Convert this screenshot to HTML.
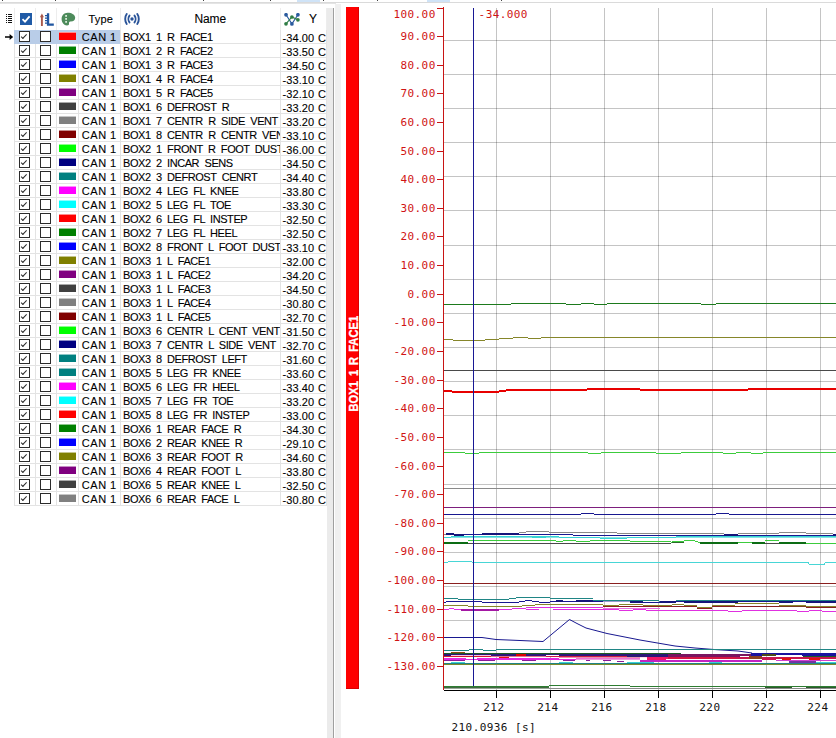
<!DOCTYPE html>
<html lang="en"><head><meta charset="utf-8"><title>Signal list and chart</title>
<style>
html,body{margin:0;padding:0;}
body{width:836px;height:738px;background:#fff;overflow:hidden;position:relative;font-family:"Liberation Sans",sans-serif;font-size:12px;color:#1a1a1a;}
#top{position:absolute;left:0;top:2px;width:836px;height:2px;background:linear-gradient(90deg,transparent 336px,#fff 336px) 0 1px/100% 1px no-repeat,linear-gradient(#dadada,#dadada 1px,#e4e4e4 1px);}
#top:before{content:"";position:absolute;left:297px;top:-2px;width:23px;height:2px;background:#cfe3f7;box-shadow:130px 0 0 #cfe3f7;}
#top i{position:absolute;top:-2px;width:1px;height:1px;background:#444;}
#left{position:absolute;left:0;top:0;width:327px;height:738px;}
#hdr{position:absolute;left:0;top:8px;width:327px;height:22px;}
#hdr .sep{position:absolute;top:0px;width:1px;height:22px;background:#ededed;}
#hdr .t{position:absolute;top:4px;height:14px;line-height:14px;font-size:12px;color:#000;-webkit-text-stroke:0.1px #000;}
#hdr svg{position:absolute;}
#rows{position:absolute;left:0;top:30px;width:327px;}
.r{position:relative;height:14px;width:327px;line-height:15px;white-space:nowrap;font-size:11px;color:#000;-webkit-text-stroke:0.1px #000;}
.r span{position:absolute;top:0;height:13px;border-bottom:1px solid #e3e3e3;border-left:1px solid #e3e3e3;box-sizing:content-box;overflow:hidden;}
.c1{left:14px;width:20px;}
.c2{left:35px;width:20px;}
.c3{left:56px;width:21px;}
.c4{left:78px;width:41px;text-indent:2.8px;letter-spacing:0.6px;word-spacing:-0.4px;}
.c5{left:120px;width:159px;text-indent:2.1px;letter-spacing:-0.45px;word-spacing:2.8px;}
.c6{left:280px;width:45px;line-height:17px;text-indent:1.5px;border-right:1px solid #e3e3e3;word-spacing:0.5px;letter-spacing:0.1px;}
.r.sel .c1,.r.sel .c2,.r.sel .c3,.r.sel .c4{background:#b9cde8;border-bottom-color:#b9cde8;border-left-color:#b9cde8;}
.cb{position:absolute;left:4px;top:1px;width:9px;height:9px;border:1px solid #2b2b2b;background:#fff;}
.c2 .cb{left:4px;}
.ck:after{content:"";position:absolute;box-sizing:border-box;left:3.1px;top:4.4px;width:6.3px;height:3.1px;border-left:1.15px solid #2b2b2b;border-bottom:1.15px solid #2b2b2b;transform:rotate(-47deg);transform-origin:0% 100%;}
.sw{position:absolute;left:2px;top:3px;width:17px;height:7px;}
#arrow{position:absolute;left:4px;top:32px;width:10px;height:10px;}
#sb{position:absolute;left:327px;top:8px;width:6px;height:730px;background:#ebebeb;}
#sbline{position:absolute;left:333px;top:8px;width:1px;height:730px;background:#a0a0a0;}
#split{position:absolute;left:335px;top:4px;width:6px;height:734px;background:#f0f0f0;}
#chart{position:absolute;left:0;top:0;}
.mono{font-family:"DejaVu Sans Mono","Liberation Mono",monospace;font-size:11px;letter-spacing:0.42px;}

</style></head>
<body>
<div id="top"><i style="left:2px"></i><i style="left:55px"></i><i style="left:203px"></i><i style="left:270px"></i><i style="left:323px"></i><i style="left:377px"></i><i style="left:501px"></i></div>
<div id="left">
<div id="hdr">
<i class="sep" style="left:14px"></i><i class="sep" style="left:35px"></i><i class="sep" style="left:56px"></i><i class="sep" style="left:78px"></i><i class="sep" style="left:120px"></i><i class="sep" style="left:280px"></i><i class="sep" style="left:326px"></i>
<svg style="left:5px;top:5px" width="8" height="11" viewBox="0 0 8 11"><g fill="#111"><rect x="1" y="1" width="1" height="1"/><rect x="3" y="1" width="4" height="1"/><rect x="1" y="3" width="1" height="1"/><rect x="3" y="3" width="4" height="1"/><rect x="1" y="5" width="1" height="1"/><rect x="3" y="5" width="4" height="1"/><rect x="1" y="7" width="1" height="1"/><rect x="3" y="7" width="4" height="1"/><rect x="1" y="9" width="1" height="1"/><rect x="3" y="9" width="4" height="1"/></g></svg>
<svg style="left:20px;top:5px" width="12" height="12" viewBox="0 0 12 12"><rect width="12" height="12" fill="#1f5aa6"/><path d="M2.5 6.2 L5 8.6 L9.6 3.4" fill="none" stroke="#fff" stroke-width="1.8"/></svg>
<svg style="left:39px;top:5px" width="16" height="14" viewBox="0 0 16 14"><path d="M2.9 13V2.2" fill="none" stroke="#a9584a" stroke-width="1.9"/><path d="M0.9 4.3L2.9 0.6L4.9 4.3Z" fill="#a9584a"/><path d="M9.05 0.2V11.7H14.8" fill="none" stroke="#1f55a0" stroke-width="2.3"/><path d="M6 2.6H8M6 5.1H8M6 7.6H8M6 10.1H8" stroke="#1f55a0" stroke-width="1.1"/></svg>
<svg style="left:61px;top:4px" width="15" height="14" viewBox="0 0 15 14"><path d="M6.6 0.8C3 0.8 0.6 3.6 0.6 7C0.6 10.4 3 13.4 6 13.4C7.6 13.4 8.2 12.4 8 11.4C7.8 10.2 8.6 9.6 9.8 9.6C12.6 9.6 14.2 8 14.2 5.8C14.2 2.8 10.8 0.8 6.6 0.8Z" fill="#4d8b5b"/><rect x="4.2" y="3" width="1.8" height="1.8" fill="#d9ecd9"/><rect x="4.2" y="6" width="1.8" height="1.8" fill="#d9ecd9"/><rect x="4.2" y="9" width="1.8" height="1.8" fill="#d9ecd9"/></svg>
<span class="t" style="left:88.4px;top:3.5px;font-size:11px;letter-spacing:0.25px">Type</span>
<svg style="left:124px;top:5px" width="16" height="12" viewBox="0 0 16 12"><g fill="none" stroke="#2a5499" stroke-width="1.9" stroke-linecap="round"><path d="M2.7 1C0.7 3.6 0.7 8.4 2.7 11"/><path d="M5.5 2.6C4.1 4.4 4.1 7.6 5.5 9.4"/><path d="M13.3 1C15.3 3.6 15.3 8.4 13.3 11"/><path d="M10.5 2.6C11.9 4.4 11.9 7.6 10.5 9.4"/></g><circle cx="8" cy="6" r="1.7" fill="#2a5499"/></svg>
<span class="t" style="left:194.5px;letter-spacing:-0.15px">Name</span>
<svg style="left:284px;top:5px" width="16" height="13" viewBox="0 0 16 13"><g stroke-width="1.1" fill="none"><path d="M2.05 1.8L7.9 10.9L13.9 1.8" stroke="#2a5a9e"/><path d="M2 10.8L7.9 4L13.9 6.8" stroke="#2f7d45"/></g><circle cx="2.05" cy="1.8" r="1.85" fill="#2a5a9e"/><circle cx="13.9" cy="1.8" r="1.85" fill="#2a5a9e"/><circle cx="7.9" cy="10.9" r="1.85" fill="#2a5a9e"/><circle cx="2" cy="10.8" r="1.85" fill="#2f7d45"/><circle cx="7.9" cy="4" r="1.85" fill="#2f7d45"/><circle cx="13.9" cy="6.8" r="1.85" fill="#2f7d45"/></svg>
<span class="t" style="left:309px">Y</span>
</div>

<div id="rows">
<div class="r sel"><span class="c1"><i class="cb ck"></i></span><span class="c2"><i class="cb"></i></span><span class="c3"><i class="sw" style="background:#ff0000;box-shadow:0 -1px 0 #ff8c8c"></i></span><span class="c4">CAN 1</span><span class="c5">BOX1 1 R FACE1</span><span class="c6">-34.00 C</span></div>
<div class="r"><span class="c1"><i class="cb ck"></i></span><span class="c2"><i class="cb"></i></span><span class="c3"><i class="sw" style="background:#008000;box-shadow:0 -1px 0 #8cc68c"></i></span><span class="c4">CAN 1</span><span class="c5">BOX1 2 R FACE2</span><span class="c6">-33.50 C</span></div>
<div class="r"><span class="c1"><i class="cb ck"></i></span><span class="c2"><i class="cb"></i></span><span class="c3"><i class="sw" style="background:#0000ff;box-shadow:0 -1px 0 #8c8cff"></i></span><span class="c4">CAN 1</span><span class="c5">BOX1 3 R FACE3</span><span class="c6">-34.50 C</span></div>
<div class="r"><span class="c1"><i class="cb ck"></i></span><span class="c2"><i class="cb"></i></span><span class="c3"><i class="sw" style="background:#808000;box-shadow:0 -1px 0 #c6c68c"></i></span><span class="c4">CAN 1</span><span class="c5">BOX1 4 R FACE4</span><span class="c6">-33.10 C</span></div>
<div class="r"><span class="c1"><i class="cb ck"></i></span><span class="c2"><i class="cb"></i></span><span class="c3"><i class="sw" style="background:#800080;box-shadow:0 -1px 0 #c68cc6"></i></span><span class="c4">CAN 1</span><span class="c5">BOX1 5 R FACE5</span><span class="c6">-32.10 C</span></div>
<div class="r"><span class="c1"><i class="cb ck"></i></span><span class="c2"><i class="cb"></i></span><span class="c3"><i class="sw" style="background:#404040;box-shadow:0 -1px 0 #a9a9a9"></i></span><span class="c4">CAN 1</span><span class="c5">BOX1 6 DEFROST R</span><span class="c6">-33.20 C</span></div>
<div class="r"><span class="c1"><i class="cb ck"></i></span><span class="c2"><i class="cb"></i></span><span class="c3"><i class="sw" style="background:#808080;box-shadow:0 -1px 0 #c6c6c6"></i></span><span class="c4">CAN 1</span><span class="c5">BOX1 7 CENTR R SIDE VENT</span><span class="c6">-33.20 C</span></div>
<div class="r"><span class="c1"><i class="cb ck"></i></span><span class="c2"><i class="cb"></i></span><span class="c3"><i class="sw" style="background:#800000;box-shadow:0 -1px 0 #c68c8c"></i></span><span class="c4">CAN 1</span><span class="c5">BOX1 8 CENTR R CENTR VENT</span><span class="c6">-33.10 C</span></div>
<div class="r"><span class="c1"><i class="cb ck"></i></span><span class="c2"><i class="cb"></i></span><span class="c3"><i class="sw" style="background:#00ff00;box-shadow:0 -1px 0 #8cff8c"></i></span><span class="c4">CAN 1</span><span class="c5">BOX2 1 FRONT R FOOT DUST</span><span class="c6">-36.00 C</span></div>
<div class="r"><span class="c1"><i class="cb ck"></i></span><span class="c2"><i class="cb"></i></span><span class="c3"><i class="sw" style="background:#000080;box-shadow:0 -1px 0 #8c8cc6"></i></span><span class="c4">CAN 1</span><span class="c5">BOX2 2 INCAR SENS</span><span class="c6">-34.50 C</span></div>
<div class="r"><span class="c1"><i class="cb ck"></i></span><span class="c2"><i class="cb"></i></span><span class="c3"><i class="sw" style="background:#008080;box-shadow:0 -1px 0 #8cc6c6"></i></span><span class="c4">CAN 1</span><span class="c5">BOX2 3 DEFROST CENRT</span><span class="c6">-34.40 C</span></div>
<div class="r"><span class="c1"><i class="cb ck"></i></span><span class="c2"><i class="cb"></i></span><span class="c3"><i class="sw" style="background:#ff00ff;box-shadow:0 -1px 0 #ff8cff"></i></span><span class="c4">CAN 1</span><span class="c5">BOX2 4 LEG FL KNEE</span><span class="c6">-33.80 C</span></div>
<div class="r"><span class="c1"><i class="cb ck"></i></span><span class="c2"><i class="cb"></i></span><span class="c3"><i class="sw" style="background:#00ffff;box-shadow:0 -1px 0 #8cffff"></i></span><span class="c4">CAN 1</span><span class="c5">BOX2 5 LEG FL TOE</span><span class="c6">-33.30 C</span></div>
<div class="r"><span class="c1"><i class="cb ck"></i></span><span class="c2"><i class="cb"></i></span><span class="c3"><i class="sw" style="background:#ff0000;box-shadow:0 -1px 0 #ff8c8c"></i></span><span class="c4">CAN 1</span><span class="c5">BOX2 6 LEG FL INSTEP</span><span class="c6">-32.50 C</span></div>
<div class="r"><span class="c1"><i class="cb ck"></i></span><span class="c2"><i class="cb"></i></span><span class="c3"><i class="sw" style="background:#008000;box-shadow:0 -1px 0 #8cc68c"></i></span><span class="c4">CAN 1</span><span class="c5">BOX2 7 LEG FL HEEL</span><span class="c6">-32.50 C</span></div>
<div class="r"><span class="c1"><i class="cb ck"></i></span><span class="c2"><i class="cb"></i></span><span class="c3"><i class="sw" style="background:#0000ff;box-shadow:0 -1px 0 #8c8cff"></i></span><span class="c4">CAN 1</span><span class="c5">BOX2 8 FRONT L FOOT DUST</span><span class="c6">-33.10 C</span></div>
<div class="r"><span class="c1"><i class="cb ck"></i></span><span class="c2"><i class="cb"></i></span><span class="c3"><i class="sw" style="background:#808000;box-shadow:0 -1px 0 #c6c68c"></i></span><span class="c4">CAN 1</span><span class="c5">BOX3 1 L FACE1</span><span class="c6">-32.00 C</span></div>
<div class="r"><span class="c1"><i class="cb ck"></i></span><span class="c2"><i class="cb"></i></span><span class="c3"><i class="sw" style="background:#800080;box-shadow:0 -1px 0 #c68cc6"></i></span><span class="c4">CAN 1</span><span class="c5">BOX3 1 L FACE2</span><span class="c6">-34.20 C</span></div>
<div class="r"><span class="c1"><i class="cb ck"></i></span><span class="c2"><i class="cb"></i></span><span class="c3"><i class="sw" style="background:#404040;box-shadow:0 -1px 0 #a9a9a9"></i></span><span class="c4">CAN 1</span><span class="c5">BOX3 1 L FACE3</span><span class="c6">-34.50 C</span></div>
<div class="r"><span class="c1"><i class="cb ck"></i></span><span class="c2"><i class="cb"></i></span><span class="c3"><i class="sw" style="background:#808080;box-shadow:0 -1px 0 #c6c6c6"></i></span><span class="c4">CAN 1</span><span class="c5">BOX3 1 L FACE4</span><span class="c6">-30.80 C</span></div>
<div class="r"><span class="c1"><i class="cb ck"></i></span><span class="c2"><i class="cb"></i></span><span class="c3"><i class="sw" style="background:#800000;box-shadow:0 -1px 0 #c68c8c"></i></span><span class="c4">CAN 1</span><span class="c5">BOX3 1 L FACE5</span><span class="c6">-32.70 C</span></div>
<div class="r"><span class="c1"><i class="cb ck"></i></span><span class="c2"><i class="cb"></i></span><span class="c3"><i class="sw" style="background:#00ff00;box-shadow:0 -1px 0 #8cff8c"></i></span><span class="c4">CAN 1</span><span class="c5">BOX3 6 CENTR L CENT VENT</span><span class="c6">-31.50 C</span></div>
<div class="r"><span class="c1"><i class="cb ck"></i></span><span class="c2"><i class="cb"></i></span><span class="c3"><i class="sw" style="background:#000080;box-shadow:0 -1px 0 #8c8cc6"></i></span><span class="c4">CAN 1</span><span class="c5">BOX3 7 CENTR L SIDE VENT</span><span class="c6">-32.70 C</span></div>
<div class="r"><span class="c1"><i class="cb ck"></i></span><span class="c2"><i class="cb"></i></span><span class="c3"><i class="sw" style="background:#008080;box-shadow:0 -1px 0 #8cc6c6"></i></span><span class="c4">CAN 1</span><span class="c5">BOX3 8 DEFROST LEFT</span><span class="c6">-31.60 C</span></div>
<div class="r"><span class="c1"><i class="cb ck"></i></span><span class="c2"><i class="cb"></i></span><span class="c3"><i class="sw" style="background:#008080;box-shadow:0 -1px 0 #8cc6c6"></i></span><span class="c4">CAN 1</span><span class="c5">BOX5 5 LEG FR KNEE</span><span class="c6">-33.60 C</span></div>
<div class="r"><span class="c1"><i class="cb ck"></i></span><span class="c2"><i class="cb"></i></span><span class="c3"><i class="sw" style="background:#ff00ff;box-shadow:0 -1px 0 #ff8cff"></i></span><span class="c4">CAN 1</span><span class="c5">BOX5 6 LEG FR HEEL</span><span class="c6">-33.40 C</span></div>
<div class="r"><span class="c1"><i class="cb ck"></i></span><span class="c2"><i class="cb"></i></span><span class="c3"><i class="sw" style="background:#00ffff;box-shadow:0 -1px 0 #8cffff"></i></span><span class="c4">CAN 1</span><span class="c5">BOX5 7 LEG FR TOE</span><span class="c6">-33.20 C</span></div>
<div class="r"><span class="c1"><i class="cb ck"></i></span><span class="c2"><i class="cb"></i></span><span class="c3"><i class="sw" style="background:#ff0000;box-shadow:0 -1px 0 #ff8c8c"></i></span><span class="c4">CAN 1</span><span class="c5">BOX5 8 LEG FR INSTEP</span><span class="c6">-33.00 C</span></div>
<div class="r"><span class="c1"><i class="cb ck"></i></span><span class="c2"><i class="cb"></i></span><span class="c3"><i class="sw" style="background:#008000;box-shadow:0 -1px 0 #8cc68c"></i></span><span class="c4">CAN 1</span><span class="c5">BOX6 1 REAR FACE R</span><span class="c6">-34.30 C</span></div>
<div class="r"><span class="c1"><i class="cb ck"></i></span><span class="c2"><i class="cb"></i></span><span class="c3"><i class="sw" style="background:#0000ff;box-shadow:0 -1px 0 #8c8cff"></i></span><span class="c4">CAN 1</span><span class="c5">BOX6 2 REAR KNEE R</span><span class="c6">-29.10 C</span></div>
<div class="r"><span class="c1"><i class="cb ck"></i></span><span class="c2"><i class="cb"></i></span><span class="c3"><i class="sw" style="background:#808000;box-shadow:0 -1px 0 #c6c68c"></i></span><span class="c4">CAN 1</span><span class="c5">BOX6 3 REAR FOOT R</span><span class="c6">-34.60 C</span></div>
<div class="r"><span class="c1"><i class="cb ck"></i></span><span class="c2"><i class="cb"></i></span><span class="c3"><i class="sw" style="background:#800080;box-shadow:0 -1px 0 #c68cc6"></i></span><span class="c4">CAN 1</span><span class="c5">BOX6 4 REAR FOOT L</span><span class="c6">-33.80 C</span></div>
<div class="r"><span class="c1"><i class="cb ck"></i></span><span class="c2"><i class="cb"></i></span><span class="c3"><i class="sw" style="background:#404040;box-shadow:0 -1px 0 #a9a9a9"></i></span><span class="c4">CAN 1</span><span class="c5">BOX6 5 REAR KNEE L</span><span class="c6">-32.50 C</span></div>
<div class="r"><span class="c1"><i class="cb ck"></i></span><span class="c2"><i class="cb"></i></span><span class="c3"><i class="sw" style="background:#808080;box-shadow:0 -1px 0 #c6c6c6"></i></span><span class="c4">CAN 1</span><span class="c5">BOX6 6 REAR FACE L</span><span class="c6">-30.80 C</span></div>
</div>
<svg id="arrow" viewBox="0 0 10 10"><path d="M1 4.3H5.6V2L9.2 5L5.6 8V5.7H1Z" fill="#000"/></svg>
</div>
<div id="sb"></div><div id="sbline"></div><div id="split"></div>
<svg id="chart" width="836" height="738" viewBox="0 0 836 738">
<rect x="346" y="7" width="13" height="682" fill="#fe0000"/>
<path d="M358.5 7V688.5H346" fill="none" stroke="#a00000" stroke-opacity="0.4" stroke-width="1" shape-rendering="crispEdges"/>
<text transform="translate(358.1,363.7) rotate(-90) scale(0.86,1)" text-anchor="middle" font-family="Liberation Sans, sans-serif" font-weight="bold" font-size="13" word-spacing="2.2" fill="#fff" stroke="#fff" stroke-width="0.3">BOX1 1 R FACE1</text>
<g shape-rendering="crispEdges" stroke="#000" stroke-opacity="0.23" stroke-width="1">
<line x1="444" y1="40.5" x2="836" y2="40.5"/>
<line x1="444" y1="74.5" x2="836" y2="74.5"/>
<line x1="444" y1="108.5" x2="836" y2="108.5"/>
<line x1="444" y1="142.5" x2="836" y2="142.5"/>
<line x1="444" y1="176.5" x2="836" y2="176.5"/>
<line x1="444" y1="210.5" x2="836" y2="210.5"/>
<line x1="444" y1="245.5" x2="836" y2="245.5"/>
<line x1="444" y1="279.5" x2="836" y2="279.5"/>
<line x1="444" y1="313.5" x2="836" y2="313.5"/>
<line x1="444" y1="347.5" x2="836" y2="347.5"/>
<line x1="444" y1="381.5" x2="836" y2="381.5"/>
<line x1="444" y1="415.5" x2="836" y2="415.5"/>
<line x1="444" y1="449.5" x2="836" y2="449.5"/>
<line x1="444" y1="484.5" x2="836" y2="484.5"/>
<line x1="444" y1="518.5" x2="836" y2="518.5"/>
<line x1="444" y1="552.5" x2="836" y2="552.5"/>
<line x1="444" y1="586.5" x2="836" y2="586.5"/>
<line x1="444" y1="620.5" x2="836" y2="620.5"/>
<line x1="444" y1="655.5" x2="836" y2="655.5"/>
<line x1="496.5" y1="8" x2="496.5" y2="690"/>
<line x1="550.5" y1="8" x2="550.5" y2="690"/>
<line x1="604.5" y1="8" x2="604.5" y2="690"/>
<line x1="658.5" y1="8" x2="658.5" y2="690"/>
<line x1="712.5" y1="8" x2="712.5" y2="690"/>
<line x1="766.5" y1="8" x2="766.5" y2="690"/>
<line x1="820.5" y1="8" x2="820.5" y2="690"/>
</g>
<g shape-rendering="crispEdges">
<polyline points="444,304.5 510,304.5 511.5,303.5 565,303.5 566.5,304.5 580,304.5 581.5,303.5 593,303.5 594.5,304.5 606,304.5 607.5,303.5 700,303.5 701.5,304.5 715,304.5 716.5,303.5 836,303.5" fill="none" stroke="#1d7a1d" stroke-width="1" />
<polyline points="444,339.5 452,339.5 453.5,340.5 484,340.5 485.5,339.5 498,339.5 499.5,338.5 512,338.5 513.5,337.5 527,337.5 528.5,338.5 540,338.5 541.5,337.5 836,337.5" fill="none" stroke="#86862a" stroke-width="1" />
<polyline points="444,370.5 836,370.5" fill="none" stroke="#4a4a4a" stroke-width="1" />
<polyline points="444,452.5 464,452.5 465.5,453.5 478,453.5 479.5,452.5 587,452.5 588.5,453.5 600,453.5 601.5,452.5 655,452.5 656.5,453.5 680,453.5 681.5,452.5 722,452.5 723.5,453.5 735,453.5 736.5,452.5 750,452.5 751.5,453.5 762,453.5 763.5,452.5 836,452.5" fill="none" stroke="#3ccc3c" stroke-width="1" />
<polyline points="444,488.5 836,488.5" fill="none" stroke="#8a8a8a" stroke-width="1" />
<polyline points="444,507.5 836,507.5" fill="none" stroke="#7d1f7d" stroke-width="1" />
<polyline points="444,514.5 580,514.5 581.5,513.5 593,513.5 594.5,514.5 715,514.5 716.5,513.5 728,513.5 729.5,514.5 836,514.5" fill="none" stroke="#181890" stroke-width="1" />
<rect x="444" y="534" width="75" height="1" fill="#8a8a8a"/>
<rect x="519" y="532" width="7" height="1" fill="#8a8a8a"/>
<rect x="526" y="531" width="23" height="1" fill="#8a8a8a"/>
<rect x="549" y="532" width="68" height="1" fill="#8a8a8a"/>
<rect x="617" y="533" width="107" height="1" fill="#8a8a8a"/>
<rect x="738" y="533" width="41" height="1" fill="#8a8a8a"/>
<rect x="779" y="532" width="27" height="1" fill="#8a8a8a"/>
<rect x="806" y="533" width="27" height="1" fill="#8a8a8a"/>
<rect x="446" y="533" width="8" height="2" fill="#15157a"/>
<rect x="454" y="534" width="10" height="2" fill="#15157a"/>
<rect x="464" y="534" width="18" height="1" fill="#181890"/>
<rect x="482" y="533" width="37" height="2" fill="#15157a"/>
<rect x="519" y="534" width="54" height="1" fill="#181890"/>
<rect x="573" y="535" width="263" height="1" fill="#181890"/>
<rect x="724" y="534" width="14" height="2" fill="#15157a"/>
<rect x="833" y="534" width="3" height="2" fill="#15157a"/>
<rect x="451" y="536" width="108" height="1" fill="#38d4d4"/>
<rect x="676" y="536" width="160" height="1" fill="#38d4d4"/>
<rect x="444" y="537" width="392" height="1" fill="#86e4e4"/>
<rect x="444" y="537" width="7" height="1" fill="#38d4d4"/>
<rect x="532" y="537" width="14" height="1" fill="#38d4d4"/>
<rect x="559" y="537" width="41" height="1" fill="#38d4d4"/>
<rect x="627" y="537" width="49" height="1" fill="#38d4d4"/>
<rect x="600" y="538" width="27" height="1" fill="#38d4d4"/>
<rect x="468" y="540" width="88" height="1" fill="#3ccc3c"/>
<rect x="563" y="540" width="13" height="1" fill="#3ccc3c"/>
<rect x="590" y="540" width="40" height="1" fill="#3ccc3c"/>
<rect x="684" y="540" width="11" height="1" fill="#3ccc3c"/>
<rect x="765" y="540" width="14" height="1" fill="#3ccc3c"/>
<rect x="556" y="541" width="7" height="1" fill="#3ccc3c"/>
<rect x="576" y="541" width="14" height="1" fill="#3ccc3c"/>
<rect x="630" y="541" width="41" height="1" fill="#3ccc3c"/>
<rect x="672" y="541" width="12" height="1" fill="#3ccc3c"/>
<rect x="695" y="541" width="3" height="1" fill="#3ccc3c"/>
<rect x="671" y="542" width="1" height="1" fill="#3ccc3c"/>
<rect x="698" y="542" width="2" height="1" fill="#3ccc3c"/>
<rect x="738" y="542" width="14" height="1" fill="#3ccc3c"/>
<rect x="806" y="543" width="30" height="1" fill="#3ccc3c"/>
<rect x="444" y="542" width="24" height="2" fill="#0c6c14"/>
<rect x="700" y="542" width="38" height="2" fill="#0c6c14"/>
<rect x="752" y="542" width="13" height="2" fill="#0c6c14"/>
<rect x="779" y="542" width="27" height="2" fill="#0c6c14"/>
<rect x="672" y="542" width="12" height="1" fill="#2a6a2a"/>
<rect x="468" y="543" width="203" height="1" fill="#4a4a4a"/>
<rect x="765" y="543" width="14" height="1" fill="#4a4a4a"/>
<polyline points="444,562.5 447,562.5 448.5,561.5 471,561.5 472.5,562.5 808,562.5 809.5,564.5 824,564.5 825.5,562.5 836,562.5" fill="none" stroke="#48d6d6" stroke-width="1" />
<polyline points="444,583.5 836,583.5" fill="none" stroke="#8a1f1f" stroke-width="1" />
<rect x="444" y="598" width="14" height="1" fill="#1f8585"/>
<rect x="458" y="599" width="51" height="1" fill="#1f8585"/>
<rect x="509" y="598" width="7" height="1" fill="#1f8585"/>
<rect x="516" y="597" width="34" height="1" fill="#1f8585"/>
<rect x="550" y="598" width="43" height="1" fill="#1f8585"/>
<rect x="593" y="600" width="66" height="1" fill="#1f8585"/>
<rect x="659" y="601" width="17" height="1" fill="#1f8585"/>
<rect x="676" y="600" width="160" height="1" fill="#1f8585"/>
<rect x="444" y="602" width="2" height="1" fill="#181890"/>
<rect x="446" y="601" width="36" height="1" fill="#181890"/>
<rect x="482" y="602" width="37" height="1" fill="#181890"/>
<rect x="519" y="601" width="6" height="1" fill="#181890"/>
<rect x="525" y="600" width="7" height="1" fill="#181890"/>
<rect x="532" y="601" width="7" height="1" fill="#181890"/>
<rect x="539" y="602" width="11" height="1" fill="#181890"/>
<rect x="550" y="601" width="6" height="1" fill="#181890"/>
<rect x="563" y="601" width="13" height="1" fill="#181890"/>
<rect x="593" y="601" width="10" height="1" fill="#181890"/>
<rect x="643" y="602" width="17" height="1" fill="#181890"/>
<rect x="672" y="601" width="12" height="1" fill="#181890"/>
<rect x="738" y="601" width="41" height="1" fill="#181890"/>
<rect x="793" y="601" width="13" height="1" fill="#181890"/>
<rect x="603" y="601" width="27" height="1" fill="#9a9ad0"/>
<rect x="556" y="600" width="7" height="2" fill="#15157a"/>
<rect x="576" y="600" width="17" height="2" fill="#15157a"/>
<rect x="630" y="601" width="13" height="2" fill="#15157a"/>
<rect x="660" y="601" width="16" height="2" fill="#15157a"/>
<rect x="684" y="601" width="54" height="2" fill="#15157a"/>
<rect x="779" y="601" width="14" height="2" fill="#15157a"/>
<rect x="806" y="601" width="30" height="2" fill="#15157a"/>
<rect x="444" y="605" width="24" height="1" fill="#86862a"/>
<rect x="468" y="606" width="54" height="1" fill="#86862a"/>
<rect x="522" y="605" width="13" height="1" fill="#86862a"/>
<rect x="535" y="604" width="68" height="1" fill="#86862a"/>
<rect x="603" y="605" width="16" height="1" fill="#86862a"/>
<rect x="619" y="604" width="24" height="1" fill="#86862a"/>
<rect x="643" y="605" width="29" height="1" fill="#86862a"/>
<rect x="672" y="604" width="12" height="1" fill="#86862a"/>
<rect x="684" y="605" width="13" height="1" fill="#86862a"/>
<rect x="697" y="607" width="15" height="1" fill="#86862a"/>
<rect x="712" y="605" width="23" height="1" fill="#86862a"/>
<rect x="735" y="603" width="44" height="1" fill="#86862a"/>
<rect x="779" y="605" width="27" height="1" fill="#86862a"/>
<rect x="806" y="606" width="30" height="1" fill="#86862a"/>
<rect x="603" y="606" width="94" height="1" fill="#8a1f1f"/>
<rect x="697" y="608" width="15" height="1" fill="#8a1f1f"/>
<rect x="712" y="606" width="94" height="1" fill="#8a1f1f"/>
<rect x="806" y="607" width="30" height="1" fill="#8a1f1f"/>
<rect x="779" y="606" width="27" height="1" fill="#7a3a1a"/>
<rect x="444" y="609" width="5" height="1" fill="#e030e0"/>
<rect x="449" y="608" width="5" height="1" fill="#e030e0"/>
<rect x="454" y="609" width="7" height="1" fill="#e030e0"/>
<rect x="499" y="609" width="13" height="1" fill="#e030e0"/>
<rect x="512" y="608" width="14" height="1" fill="#e030e0"/>
<rect x="526" y="607" width="77" height="1" fill="#e030e0"/>
<rect x="603" y="608" width="57" height="1" fill="#e870e0"/>
<rect x="526" y="609" width="13" height="1" fill="#e030e0"/>
<rect x="553" y="609" width="66" height="1" fill="#e030e0"/>
<rect x="619" y="610" width="14" height="1" fill="#e030e0"/>
<rect x="633" y="609" width="13" height="1" fill="#e030e0"/>
<rect x="646" y="610" width="82" height="1" fill="#e030e0"/>
<rect x="728" y="611" width="14" height="1" fill="#e030e0"/>
<rect x="742" y="610" width="55" height="1" fill="#e030e0"/>
<rect x="797" y="611" width="12" height="1" fill="#e030e0"/>
<rect x="809" y="610" width="13" height="1" fill="#e030e0"/>
<rect x="822" y="611" width="14" height="1" fill="#e030e0"/>
<rect x="461" y="609" width="38" height="2" fill="#a418a4"/>
<polyline points="444,637.5 482,637.5 496,639.5 520,640.5 543,641.5 569.5,619.5 577,623.5 586,628 607,633.5 640,640 675,646 695,648 714,649.5 738,651 752,653" fill="none" stroke="#181890" stroke-width="1" shape-rendering="auto" stroke-width="1.1"/>
<polyline points="444,650.5 468,650.5 469.5,649.5 482,649.5 483.5,650.5 495,650.5 496.5,649.5 836,649.5" fill="none" stroke="#1f8585" stroke-width="1" />
<rect x="451" y="652" width="14" height="1" fill="#8a4a10"/>
<rect x="444" y="653" width="237" height="1" fill="#1e5a24"/>
<rect x="444" y="654" width="224" height="1" fill="#2c1878"/>
<rect x="444" y="655" width="7" height="1" fill="#2c1878"/>
<rect x="451" y="655" width="40" height="1" fill="#f6c6e0"/>
<rect x="491" y="655" width="55" height="1" fill="#2c1878"/>
<rect x="546" y="655" width="13" height="1" fill="#fff"/>
<rect x="559" y="655" width="109" height="1" fill="#2c1878"/>
<rect x="516" y="654" width="10" height="2" fill="#e00000"/>
<rect x="627" y="656" width="41" height="1" fill="#2c1878"/>
<rect x="444" y="656" width="47" height="1" fill="#d81830"/>
<rect x="491" y="656" width="55" height="1" fill="#e07090"/>
<rect x="546" y="656" width="81" height="1" fill="#d01848"/>
<rect x="499" y="657" width="10" height="1" fill="#e01010"/>
<rect x="559" y="657" width="81" height="1" fill="#e890b0"/>
<rect x="444" y="658" width="22" height="1" fill="#e428e4"/>
<rect x="477" y="658" width="82" height="1" fill="#e428e4"/>
<rect x="576" y="658" width="64" height="1" fill="#ee70d8"/>
<rect x="444" y="659" width="132" height="1" fill="#e428e4"/>
<rect x="576" y="659" width="64" height="1" fill="#f0a0e0"/>
<rect x="444" y="660" width="21" height="1" fill="#8a1a9a"/>
<rect x="478" y="660" width="17" height="1" fill="#8a1a9a"/>
<rect x="522" y="660" width="14" height="1" fill="#8a1a9a"/>
<rect x="563" y="660" width="12" height="1" fill="#8a1a9a"/>
<rect x="586" y="660" width="4" height="1" fill="#8a1a9a"/>
<rect x="603" y="660" width="8" height="1" fill="#8a1a9a"/>
<rect x="617" y="661" width="7" height="1" fill="#8a1a9a"/>
<rect x="668" y="654" width="72" height="3" fill="#7a1460"/>
<rect x="640" y="657" width="7" height="1" fill="#f8e0ea"/>
<rect x="647" y="657" width="21" height="3" fill="#f01868"/>
<rect x="668" y="657" width="72" height="2" fill="#d41444"/>
<rect x="666" y="659" width="18" height="1" fill="#fff"/>
<rect x="699" y="659" width="12" height="1" fill="#fff"/>
<rect x="726" y="659" width="14" height="1" fill="#fff"/>
<rect x="640" y="660" width="100" height="2" fill="#c224c2"/>
<rect x="740" y="654" width="11" height="2" fill="#7a1460"/>
<rect x="751" y="653" width="85" height="3" fill="#1a12a0"/>
<rect x="749" y="656" width="13" height="3" fill="#8a4020"/>
<rect x="762" y="654" width="14" height="2" fill="#4a4a18"/>
<rect x="736" y="657" width="13" height="2" fill="#c81450"/>
<rect x="762" y="657" width="14" height="3" fill="#c81450"/>
<rect x="776" y="657" width="60" height="2" fill="#c81450"/>
<rect x="776" y="655" width="26" height="1" fill="#fff"/>
<rect x="803" y="656" width="33" height="1" fill="#1e5a24"/>
<rect x="782" y="658" width="9" height="2" fill="#e01010"/>
<rect x="809" y="658" width="11" height="2" fill="#e01010"/>
<rect x="740" y="660" width="22" height="2" fill="#c224c2"/>
<rect x="776" y="660" width="60" height="1" fill="#d040d0"/>
<rect x="789" y="661" width="27" height="2" fill="#7434a4"/>
<rect x="451" y="662" width="14" height="1" fill="#38d4d4"/>
<rect x="559" y="662" width="14" height="1" fill="#38d4d4"/>
<rect x="627" y="662" width="27" height="1" fill="#38d4d4"/>
<rect x="709" y="662" width="13" height="1" fill="#38d4d4"/>
<rect x="816" y="662" width="20" height="1" fill="#38d4d4"/>
<rect x="444" y="663" width="392" height="1" fill="#1f8585"/>
<rect x="444" y="664" width="392" height="1" fill="#7a8a2a"/>
<rect x="444" y="686" width="105" height="1" fill="#2e7d32"/>
<rect x="444" y="687" width="105" height="1" fill="#3f6b3f"/>
<rect x="444" y="688" width="105" height="1" fill="#9aa89a"/>
<rect x="549" y="685" width="81" height="1" fill="#2e7d32"/>
<rect x="549" y="688" width="287" height="1" fill="#8a8a8a"/>
<rect x="630" y="686" width="206" height="1" fill="#2e7d32"/>
<rect x="765" y="687" width="27" height="1" fill="#2a5a2a"/>
<rect x="806" y="687" width="30" height="1" fill="#2a5a2a"/>
<path d="M444 390h8v1h47v-1h7v-1h81v-1h53v1h108v-1h88v2h-88v1h-108v-1h-53v1h-81v1h-7v1h-47v-1h-8z" fill="#e80000"/>
</g>
<g shape-rendering="crispEdges">
<line x1="443.5" y1="7" x2="443.5" y2="690" stroke="#c81414"/>
<line x1="437" y1="8.5" x2="444" y2="8.5" stroke="#c81414"/>
<line x1="437" y1="36.5" x2="444" y2="36.5" stroke="#c81414"/>
<line x1="437" y1="65.5" x2="444" y2="65.5" stroke="#c81414"/>
<line x1="437" y1="93.5" x2="444" y2="93.5" stroke="#c81414"/>
<line x1="437" y1="122.5" x2="444" y2="122.5" stroke="#c81414"/>
<line x1="437" y1="151.5" x2="444" y2="151.5" stroke="#c81414"/>
<line x1="437" y1="179.5" x2="444" y2="179.5" stroke="#c81414"/>
<line x1="437" y1="208.5" x2="444" y2="208.5" stroke="#c81414"/>
<line x1="437" y1="236.5" x2="444" y2="236.5" stroke="#c81414"/>
<line x1="437" y1="265.5" x2="444" y2="265.5" stroke="#c81414"/>
<line x1="437" y1="294.5" x2="444" y2="294.5" stroke="#c81414"/>
<line x1="437" y1="322.5" x2="444" y2="322.5" stroke="#c81414"/>
<line x1="437" y1="351.5" x2="444" y2="351.5" stroke="#c81414"/>
<line x1="437" y1="380.5" x2="444" y2="380.5" stroke="#c81414"/>
<line x1="437" y1="408.5" x2="444" y2="408.5" stroke="#c81414"/>
<line x1="437" y1="437.5" x2="444" y2="437.5" stroke="#c81414"/>
<line x1="437" y1="466.5" x2="444" y2="466.5" stroke="#c81414"/>
<line x1="437" y1="494.5" x2="444" y2="494.5" stroke="#c81414"/>
<line x1="437" y1="523.5" x2="444" y2="523.5" stroke="#c81414"/>
<line x1="437" y1="551.5" x2="444" y2="551.5" stroke="#c81414"/>
<line x1="437" y1="580.5" x2="444" y2="580.5" stroke="#c81414"/>
<line x1="437" y1="609.5" x2="444" y2="609.5" stroke="#c81414"/>
<line x1="437" y1="637.5" x2="444" y2="637.5" stroke="#c81414"/>
<line x1="437" y1="666.5" x2="444" y2="666.5" stroke="#c81414"/>
<line x1="473.5" y1="8" x2="473.5" y2="686" stroke="#181894"/>
<line x1="444" y1="690.5" x2="836" y2="690.5" stroke="#000"/>
<line x1="496.5" y1="691" x2="496.5" y2="698" stroke="#000"/>
<line x1="550.5" y1="691" x2="550.5" y2="698" stroke="#000"/>
<line x1="604.5" y1="691" x2="604.5" y2="698" stroke="#000"/>
<line x1="658.5" y1="691" x2="658.5" y2="698" stroke="#000"/>
<line x1="712.5" y1="691" x2="712.5" y2="698" stroke="#000"/>
<line x1="766.5" y1="691" x2="766.5" y2="698" stroke="#000"/>
<line x1="820.5" y1="691" x2="820.5" y2="698" stroke="#000"/>
</g>
<g class="mono" fill="#d01414" text-anchor="end">
<text x="435.7" y="18">100.00</text>
<text x="435.7" y="40">90.00</text>
<text x="435.7" y="69">80.00</text>
<text x="435.7" y="97">70.00</text>
<text x="435.7" y="126">60.00</text>
<text x="435.7" y="155">50.00</text>
<text x="435.7" y="183">40.00</text>
<text x="435.7" y="212">30.00</text>
<text x="435.7" y="240">20.00</text>
<text x="435.7" y="269">10.00</text>
<text x="435.7" y="298">0.00</text>
<text x="435.7" y="326">-10.00</text>
<text x="435.7" y="355">-20.00</text>
<text x="435.7" y="384">-30.00</text>
<text x="435.7" y="412">-40.00</text>
<text x="435.7" y="441">-50.00</text>
<text x="435.7" y="470">-60.00</text>
<text x="435.7" y="498">-70.00</text>
<text x="435.7" y="527">-80.00</text>
<text x="435.7" y="555">-90.00</text>
<text x="435.7" y="584">-100.00</text>
<text x="435.7" y="613">-110.00</text>
<text x="435.7" y="641">-120.00</text>
<text x="435.7" y="670">-130.00</text>
</g>
<text class="mono" x="478.6" y="18" fill="#d01414">-34.000</text>
<g class="mono" fill="#111">
<text x="483.3" y="711">212</text>
<text x="537.3" y="711">214</text>
<text x="591.3" y="711">216</text>
<text x="645.3" y="711">218</text>
<text x="699.3" y="711">220</text>
<text x="753.3" y="711">222</text>
<text x="807.3" y="711">224</text>
<text x="451.5" y="731">210.0936 [s]</text>
</g>
</svg>
</body></html>
